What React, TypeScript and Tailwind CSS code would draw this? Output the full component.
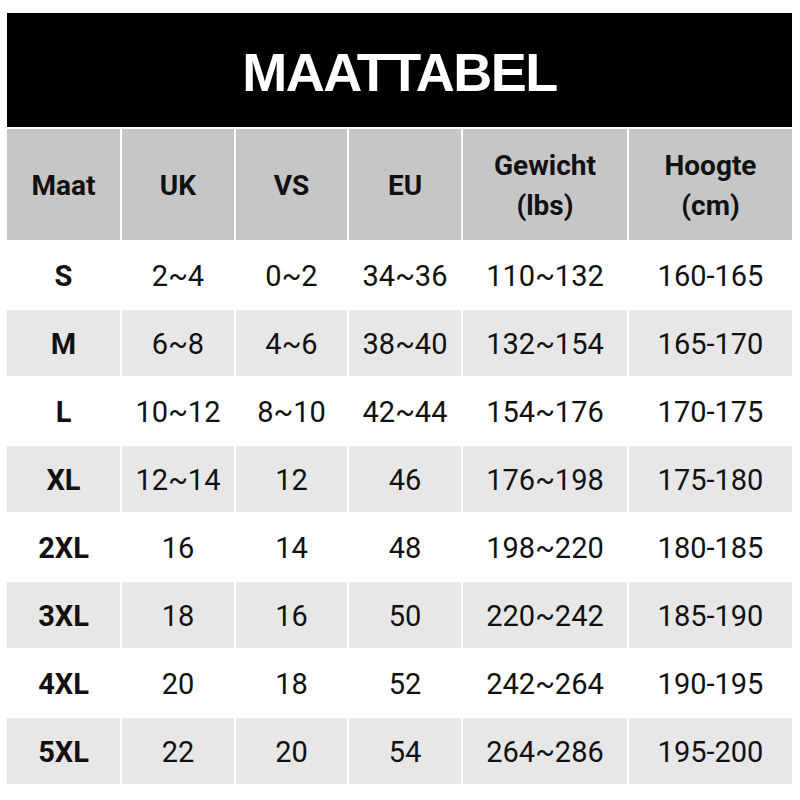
import React from "react";

const rows: string[][] = [
  ["S", "2~4", "0~2", "34~36", "110~132", "160-165"],
  ["M", "6~8", "4~6", "38~40", "132~154", "165-170"],
  ["L", "10~12", "8~10", "42~44", "154~176", "170-175"],
  ["XL", "12~14", "12", "46", "176~198", "175-180"],
  ["2XL", "16", "14", "48", "198~220", "180-185"],
  ["3XL", "18", "16", "50", "220~242", "185-190"],
  ["4XL", "20", "18", "52", "242~264", "190-195"],
  ["5XL", "22", "20", "54", "264~286", "195-200"],
];

const headers: React.ReactNode[] = [
  "Maat",
  "UK",
  "VS",
  "EU",
  <>
    Gewicht
    <br />
    (lbs)
  </>,
  <>
    Hoogte
    <br />
    (cm)
  </>,
];

export default function App() {
  return (
    <div className="w-[800px] h-[800px] bg-white pl-[7px] pt-[13px]">
      <div className="w-[785px] flex flex-col gap-[2px]" style={{ fontFamily: "Roboto, 'Liberation Sans', sans-serif" }}>
        <div className="h-[114px] bg-black flex items-center justify-center">
          <span
            className="text-white font-bold text-[54px] tracking-[-1.5px] leading-none pt-[3px]"
            style={{ fontFamily: "'Liberation Sans', Arial, sans-serif" }}
          >
            MAATTABEL
          </span>
        </div>
        <div className="grid grid-cols-[113px_112px_111px_112px_164px_163px] gap-[2px]">
          {headers.map((h, i) => (
            <div
              key={i}
              className="h-[111px] bg-[#c6c6c6] flex items-center justify-center text-center font-bold text-[28px] leading-[40px] text-[#111] pt-[2px]"
            >
              <span>{h}</span>
            </div>
          ))}
        </div>
        <div className="grid grid-cols-[113px_112px_111px_112px_164px_163px] gap-[2px]">
          {rows.map((r, ri) =>
            r.map((c, ci) => (
              <div
                key={`${ri}-${ci}`}
                className={`h-[66px] flex items-center justify-center text-[29px] text-[#111] pt-[4px] ${
                  ri % 2 === 1 ? "bg-[#e7e7e7]" : "bg-white"
                } ${ci === 0 ? "font-bold" : "font-normal"}`}
              >
                {c}
              </div>
            ))
          )}
        </div>
      </div>
    </div>
  );
}
